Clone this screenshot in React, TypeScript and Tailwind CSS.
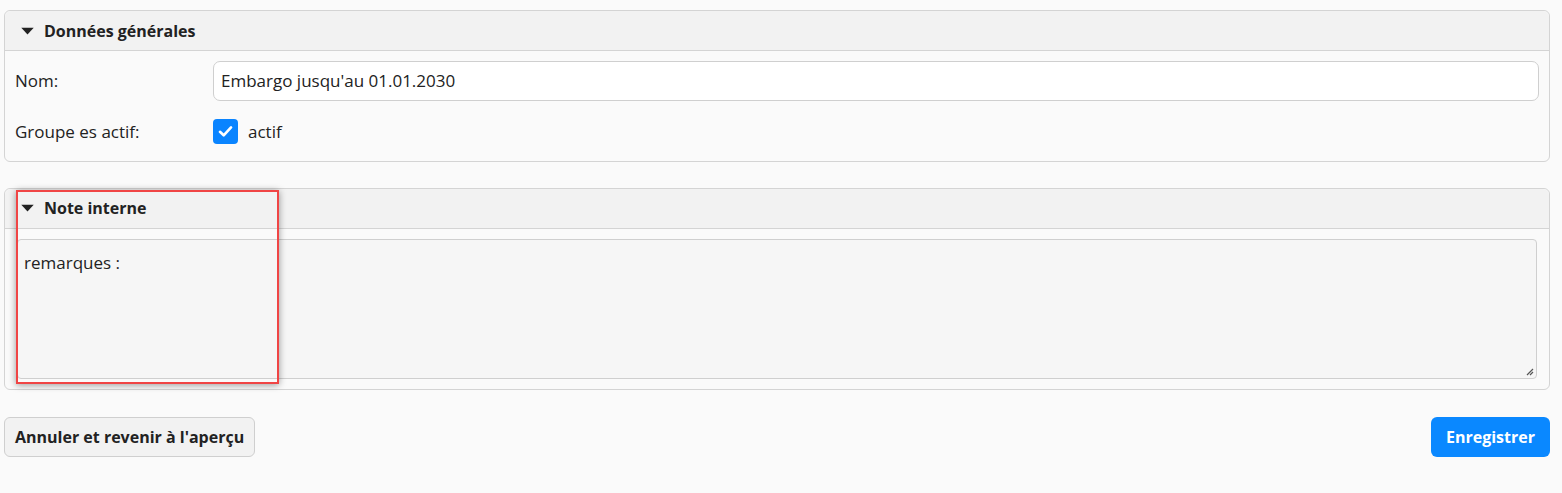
import React from "react";

function Caret() {
  return (
    <svg width="13" height="8" viewBox="0 0 13 8" className="shrink-0">
      <path d="M0.3 0.8 L12.7 0.8 L6.5 7.6 Z" fill="#222" />
    </svg>
  );
}

function PanelHeader({ title }: { title: string }) {
  return (
    <div className="flex items-center gap-[10px] h-[40px] px-[16px] bg-[#f2f2f2] border-b border-[#d4d4d4] rounded-t-[6px]">
      <Caret />
      <span className="font-bold text-[16px] text-[#222]">{title}</span>
    </div>
  );
}

export default function App() {
  return (
    <div
      className="relative min-h-[493px] bg-[#fafafa] pl-[4px] pr-[12px] pt-[10px] text-[#222]"
      style={{ fontFamily: "'Open Sans', 'Noto Sans', sans-serif" }}
    >
      <div className="border border-[#d4d4d4] rounded-[6px] bg-[#fafafa]">
        <PanelHeader title="Données générales" />
        <div className="px-[10px] pt-[10px] pb-[16px] flex flex-col gap-[18px]">
          <div className="flex items-center">
            <label className="w-[198px] text-[17px]">Nom:</label>
            <div className="flex-1 h-[40px] bg-white border border-[#cfcfcf] rounded-[7px] flex items-center px-[7px] text-[17px]">
              Embargo jusqu'au 01.01.2030
            </div>
          </div>
          <div className="flex items-center">
            <label className="w-[198px] text-[17px]">Groupe es actif:</label>
            <div className="flex items-center gap-[10px]">
              <div className="w-[25px] h-[25px] rounded-[4px] bg-[#0a84ff] flex items-center justify-center">
                <svg width="17" height="17" viewBox="0 0 16 16">
                  <path d="M2.8 8.3 L6.3 11.6 L13.2 4.2" stroke="white" strokeWidth="2.5" fill="none" strokeLinecap="round" strokeLinejoin="round" />
                </svg>
              </div>
              <span className="text-[17px]">actif</span>
            </div>
          </div>
        </div>
      </div>

      <div className="mt-[26px] border border-[#d4d4d4] rounded-[6px] bg-[#fafafa]">
        <PanelHeader title="Note interne" />
        <div className="px-[12px] pt-[10px] pb-[10px]">
          <div className="relative h-[140px] bg-[#f6f6f6] border border-[#cfcfcf] rounded-[4px] px-[6px] pt-[10px] text-[17px]">
            remarques :
            <svg width="10" height="10" viewBox="0 0 10 10" className="absolute right-[2px] bottom-[2px]">
              <path d="M9 3 L3 9 M9 6 L6 9" stroke="#555" strokeWidth="1.2" />
            </svg>
          </div>
        </div>
      </div>

      <div className="mt-[27px] flex justify-between items-center">
        <button className="h-[40px] px-[10px] bg-[#f2f2f2] border border-[#cfcfcf] rounded-[6px] font-bold text-[16px] text-[#222]">
          Annuler et revenir à l'aperçu
        </button>
        <button className="h-[40px] px-[15px] bg-[#0a88ff] rounded-[6px] font-bold text-[16px] text-white">
          Enregistrer
        </button>
      </div>

      <div className="absolute left-[16px] top-[190px] w-[263px] h-[194px] border-2 border-[#f04545] shadow-[0_1px_7px_rgba(0,0,0,0.4)] pointer-events-none" />
    </div>
  );
}
